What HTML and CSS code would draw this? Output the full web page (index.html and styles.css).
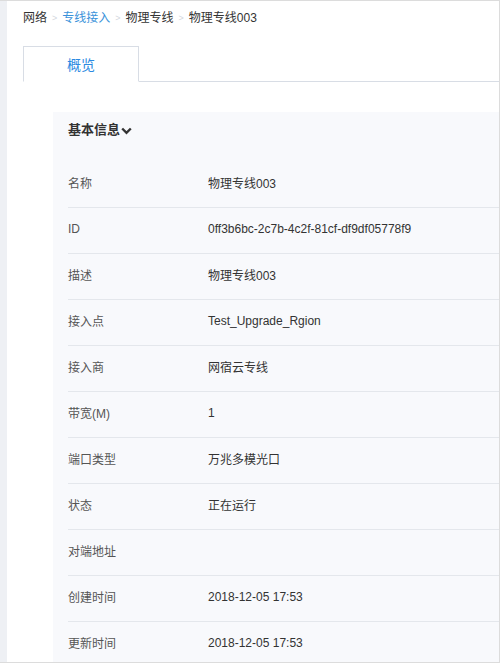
FILE: index.html
```html
<!DOCTYPE html>
<html lang="zh-CN">
<head>
<meta charset="utf-8">
<title>物理专线003</title>
<link rel="stylesheet" href="styles.css">
</head>
<body>
<div class="frame">
  <div class="side"></div>
  <div class="main">
    <nav class="crumbs">
      <span class="crumb">网络</span>
      <span class="sep">&gt;</span>
      <a class="crumb link">专线接入</a>
      <span class="sep">&gt;</span>
      <span class="crumb">物理专线</span>
      <span class="sep">&gt;</span>
      <span class="crumb">物理专线003</span>
    </nav>
    <div class="tabs">
      <div class="tab active">概览</div>
    </div>
    <section class="panel">
      <h3 class="panel-title">基本信息<svg class="chev" width="11" height="8" viewBox="0 0 11 8"><path d="M1.2 1.5 L5.5 5.8 L9.8 1.5" fill="none" stroke="#333" stroke-width="2.4"/></svg></h3>
      <div class="rows">
        <div class="row"><span class="label">名称</span><span class="value">物理专线003</span></div>
        <div class="row"><span class="label">ID</span><span class="value">0ff3b6bc-2c7b-4c2f-81cf-df9df05778f9</span></div>
        <div class="row"><span class="label">描述</span><span class="value">物理专线003</span></div>
        <div class="row"><span class="label">接入点</span><span class="value">Test_Upgrade_Rgion</span></div>
        <div class="row"><span class="label">接入商</span><span class="value">网宿云专线</span></div>
        <div class="row"><span class="label">带宽(M)</span><span class="value">1</span></div>
        <div class="row"><span class="label">端口类型</span><span class="value">万兆多模光口</span></div>
        <div class="row"><span class="label">状态</span><span class="value">正在运行</span></div>
        <div class="row"><span class="label">对端地址</span><span class="value"></span></div>
        <div class="row"><span class="label">创建时间</span><span class="value">2018-12-05 17:53</span></div>
        <div class="row"><span class="label">更新时间</span><span class="value">2018-12-05 17:53</span></div>
      </div>
    </section>
  </div>
</div>
</body>
</html>
```
FILE: styles.css
```css
* { box-sizing: border-box; }
html, body {
  margin: 0;
  padding: 0;
  background: #fff;
}
body {
  font-family: "Liberation Sans", "Noto Sans CJK SC", sans-serif;
  font-size: 12px;
  color: #333;
}
.frame {
  display: flex;
  width: 500px;
  height: 663px;
  border-top: 1px solid #dcdcdc;
  border-right: 1px solid #dcdcdc;
  border-bottom: 1px solid #dcdcdc;
  overflow: hidden;
}
.side {
  width: 7px;
  flex: none;
  background: #eef0f4;
}
.main {
  flex: 1;
  min-width: 0;
  padding-left: 16px;
}
.crumbs {
  display: flex;
  align-items: center;
  gap: 5px;
  height: 32px;
  padding-top: 1px;
  line-height: 16px;
}
.crumb { color: #333; }
.crumb.link { color: #3a92da; }
.sep {
  color: #d3d7de;
  font-size: 9px;
}
.tabs {
  display: flex;
  margin-top: 13px;
  border-bottom: 1px solid #d8dde5;
}
.tab {
  width: 116px;
  height: 36px;
  margin-bottom: -1px;
  border: 1px solid #d8dde5;
  border-bottom: 1px solid #fff;
  background: #fff;
  color: #2b8ae2;
  font-size: 14px;
  line-height: 36px;
  text-align: center;
}
.panel {
  margin: 30px 0 0 30px;
  background: #f8f9fc;
}
.panel-title {
  display: flex;
  align-items: center;
  gap: 1px;
  margin: 0;
  padding: 9px 15px 23px;
  line-height: 18px;
  font-size: 13px;
  font-weight: bold;
  color: #333;
}
.chev { margin-top: 1px; }
.rows { padding-left: 15px; }
.row {
  display: flex;
  align-items: center;
  height: 46px;
  padding-bottom: 4px;
  border-bottom: 1px solid #e4e7ec;
}
.label {
  width: 140px;
  flex: none;
  color: #555;
}
.value { color: #333; }
```
